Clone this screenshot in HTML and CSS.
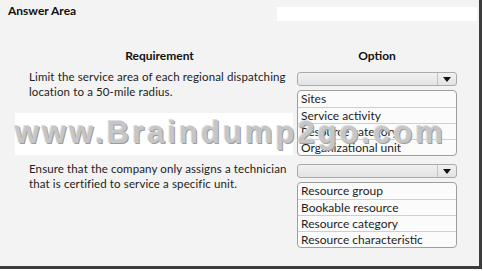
FILE: index.html
```html
<!DOCTYPE html>
<html lang="en">
<head>
  <meta charset="UTF-8">
  <title>Answer Area</title>
  <link rel="stylesheet" href="styles.css">
</head>
<body>
  <div class="frame">
    <div class="title">Answer Area</div>

    <div class="grid">
      <div class="head">Requirement</div>
      <div class="head">Option</div>

      <div class="req">Limit the service area of each regional dispatching location to a 50-mile radius.</div>
      <div class="opt">
        <div class="select"><span class="arrow"></span></div>
        <ul class="list">
          <li>Sites</li>
          <li>Service activity</li>
          <li>Resource category</li>
          <li>Organizational unit</li>
        </ul>
      </div>

      <div class="req">Ensure that the company only assigns a technician that is certified to service a specific unit.</div>
      <div class="opt">
        <div class="select"><span class="arrow"></span></div>
        <ul class="list">
          <li>Resource group</li>
          <li>Bookable resource</li>
          <li>Resource category</li>
          <li>Resource characteristic</li>
        </ul>
      </div>
    </div>

    <div class="glare"></div>
    <div class="wm-band"></div>
    <div class="wm">www.Braindump2go.com</div>
  </div>
</body>
</html>
```
FILE: styles.css
```css
body {
  margin: 0;
  padding: 0;
  background-color: #ffffff;
  font-family: 'Lato', 'Open Sans', sans-serif;
  color: #1e1e1e;
}
.frame {
  position: relative;
  width: 479px;
  height: 266px;
  background-color: #f3f3f3;
  border-right: 3px solid #3c3c3c;
  border-bottom: 3px solid #3c3c3c;
  overflow: hidden;
}
.title {
  padding: 3px 0 0 8px;
  font-size: 12px;
  font-weight: bold;
  line-height: 15px;
  color: #111;
}
.grid {
  display: grid;
  grid-template-columns: 261px 160px;
  column-gap: 7px;
  row-gap: 5px;
  margin: 30px 0 0 29px;
  font-size: 12px;
  line-height: 15px;
}
.head {
  text-align: center;
  font-weight: bold;
  color: #111;
  margin-bottom: 1px;
}
.req {
  font-size: 11.5px;
  letter-spacing: 0.12px;
  color: #222;
}
.opt {
  padding-top: 3px;
  position: relative;
  z-index: 1;
}
.select {
  height: 12px;
  border: 1px solid #aaaaaa;
  border-radius: 3px;
  background: linear-gradient(#f1f1f1, #e3e3e3);
  display: flex;
  justify-content: flex-end;
}
.arrow {
  width: 18px;
  border-left: 1px solid #c4c4c4;
  display: flex;
  align-items: center;
  justify-content: center;
}
.arrow::after {
  content: '';
  border-left: 4px solid transparent;
  border-right: 4px solid transparent;
  border-top: 5px solid #111;
}
.list {
  list-style: none;
  margin: 4px 0 0 0;
  padding: 0;
  border: 1px solid #9e9e9e;
  border-radius: 4px;
  background-color: #fbfbfb;
}
.list li {
  height: 15px;
  line-height: 15px;
  padding-left: 3px;
  border-top: 1px solid #cfcfcf;
  color: #1e1e1e;
}
.list li:first-child {
  border-top: none;
  height: 16px;
}
.glare {
  position: absolute;
  left: 277px;
  top: 7px;
  width: 200px;
  height: 14px;
  background-color: #ffffff;
}
.wm-band {
  position: absolute;
  left: 15px;
  top: 113px;
  width: 278px;
  height: 42px;
  background-color: #ffffff;
}
.wm {
  position: absolute;
  left: 15px;
  top: 115px;
  z-index: 2;
  font-family: 'Liberation Sans', Arial, sans-serif;
  font-size: 31px;
  font-weight: bold;
  letter-spacing: 3px;
  line-height: 36px;
  color: #c6c6c6;
  text-shadow: 1px 1px 0 #9c9c9c, -1px -1px 0 #dedede;
  white-space: nowrap;
}
```
